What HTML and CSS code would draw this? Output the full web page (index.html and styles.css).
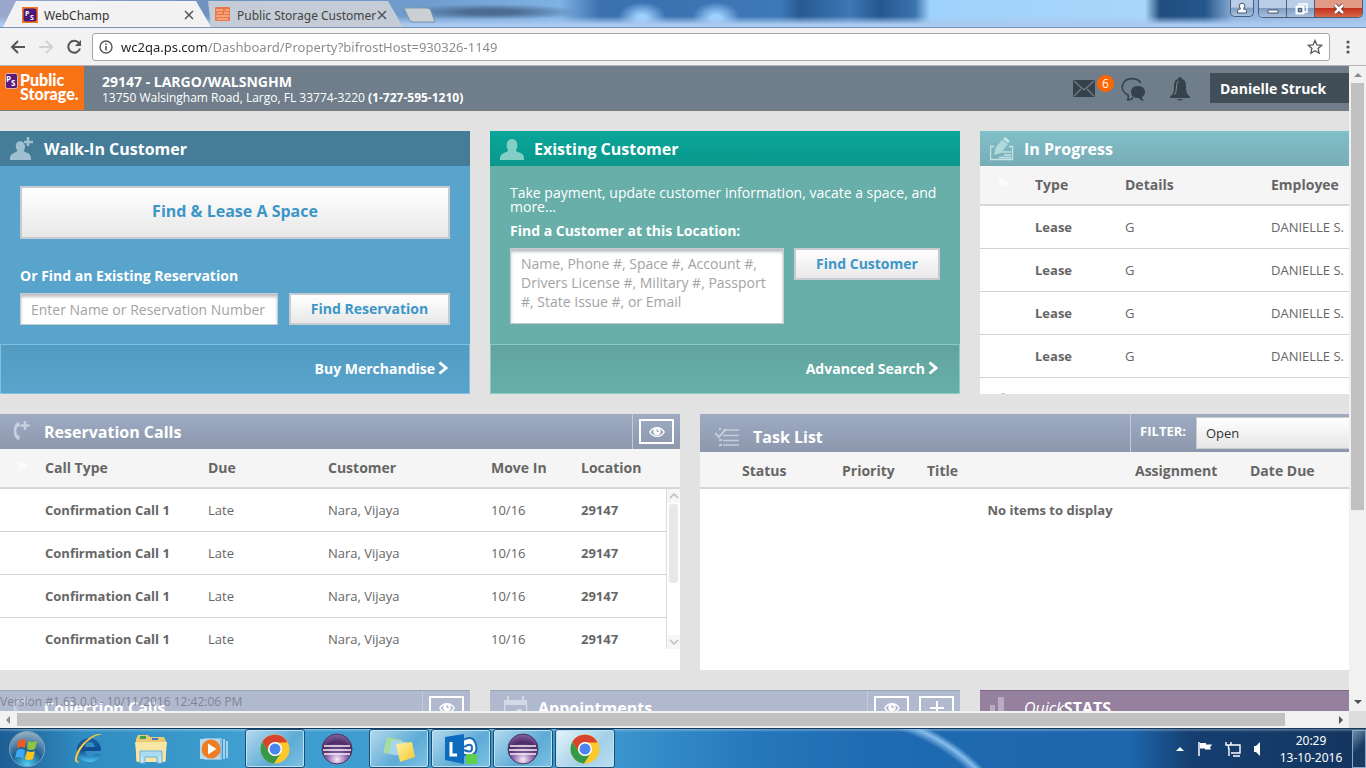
FILE: index.html
```html
<!DOCTYPE html>
<html lang="en">
<head>
<meta charset="utf-8">
<title>WebChamp</title>
<link rel="stylesheet" href="styles.css">
</head>
<body>
<svg class="defs" aria-hidden="true">
  <defs>
    <radialGradient id="orb" cx=".5" cy=".95" r=".9"><stop offset="0" stop-color="#4fd0f0"/><stop offset=".5" stop-color="#1c5f94"/><stop offset="1" stop-color="#8fa9bd"/></radialGradient>
    <radialGradient id="plum" cx=".5" cy=".85" r=".8"><stop offset="0" stop-color="#f4ecf8"/><stop offset=".35" stop-color="#a179b8"/><stop offset=".7" stop-color="#4a2a66"/><stop offset="1" stop-color="#7d5b96"/></radialGradient>
    <linearGradient id="ie" x1="0" y1="0" x2="0" y2="1"><stop offset="0" stop-color="#1a5fae"/><stop offset=".5" stop-color="#0f4a90"/><stop offset="1" stop-color="#4cc4f0"/></linearGradient>
    <linearGradient id="note" x1="0" y1="0" x2="1" y2="1"><stop offset="0" stop-color="#fff3a0"/><stop offset="1" stop-color="#f2c832"/></linearGradient>
  </defs>
  <symbol id="i-eye" viewBox="0 0 16 12"><path d="M.8 6C4 .2 12 .2 15.2 6 12 11.8 4 11.8.8 6z" fill="none" stroke="#fff" stroke-width="1.500"/><circle cx="8" cy="5.400" r="3.700" fill="#fff"/><path d="M8 3.300v2h1.800" stroke="#8d98b0" stroke-width="1" fill="none"/></symbol>
  <symbol id="i-phone" viewBox="0 0 20 22"><path d="M8 2C1 3 1 19 8 20l1-4-2.500-1C5 13 5 9 6.500 7L9 6z" fill="#c7cedd"/><path d="M14 1v9M9.500 5.500h9" stroke="#c7cedd" stroke-width="2.500"/></symbol>
  <symbol id="i-chrome" viewBox="0 0 30 30"><circle cx="15" cy="15" r="14.500" fill="#fbc92d"/><path d="M2.400 7.800A14.500 14.500 0 0 1 27.600 8.500H15A7 7 0 0 0 8.500 18z" fill="#d8432e"/><path d="M2.400 7.800A14.500 14.500 0 0 0 14 29.500L20.500 19.500A7 7 0 0 1 9 18.500z" fill="#36994a"/><circle cx="15" cy="15" r="7" fill="#fff"/><circle cx="15" cy="15" r="5.500" fill="#4a85f0"/></symbol>
  <symbol id="i-eclipse" viewBox="0 0 32 32"><circle cx="16" cy="16" r="15" fill="url(#plum)" stroke="#4b3660"/><path d="M3 13h26M2 17h28M3 21h26" stroke="#f3edf7" stroke-width="1.500"/><path d="M4 15h24M4 19h24" stroke="#4a2c62" stroke-width="1"/></symbol>
</svg>

<div class="titlebar">
  <div class="tabs">
    <div class="tab tab-on">
      <svg width="16" height="16" viewBox="0 0 16 16"><path fill="#f47920" d="M0 0h16v16H0z"/><rect x="1.500" y="1.500" width="13" height="13" rx="2" fill="#4b1878"/><text x="3" y="9" class="fav">P</text><text x="8" y="13" class="fav">S</text></svg>
      <span class="tab-name">WebChamp</span>
      <button class="tab-x" aria-label="Close tab"><svg width="10" height="10"><path d="M1 1l8 8M9 1L1 9" stroke="#555" stroke-width="1.500"/></svg></button>
    </div>
    <div class="tab tab-off">
      <svg width="16" height="16" viewBox="0 0 16 16"><rect width="15" height="14" rx="1" fill="#ee7746"/><path d="M1 3h7M10 3h4M2 6h5M9 6h5M1 9h13M2 12h11" stroke="#fbd0b8"/></svg>
      <span class="tab-name">Public Storage Customer</span>
      <button class="tab-x" aria-label="Close tab"><svg width="10" height="10"><path d="M1 1l8 8M9 1L1 9" stroke="#555" stroke-width="1.500"/></svg></button>
    </div>
    <button class="newtab" aria-label="New tab"><svg width="36" height="16"><path d="M2 1h23q3 0 4 3l4 11H11q-3 0-4-3z" fill="#cbd0d5" stroke="#7d93ab"/></svg></button>
  </div>
  <div class="winbtns">
    <button class="wb wb-user" aria-label="User"><svg width="12" height="12"><circle cx="6" cy="4" r="2.800" fill="#fff" stroke="#46596e"/><path d="M1.500 11V9q0-2 3-2h3q3 0 3 2v2z" fill="#fff" stroke="#46596e"/><path d="M4.800 5.500h2.400v2.500H4.800z" fill="#fff"/></svg></button>
    <div class="wb-group">
      <button class="wb" aria-label="Minimize"><svg width="14" height="12"><path d="M2 7h10v3H2z" fill="#fff" stroke="#46596e"/></svg></button>
      <button class="wb" aria-label="Restore"><svg width="14" height="12"><path d="M4 1h9v8h-3" fill="none" stroke="#fff" stroke-width="1.500"/><rect x="2.500" y="3.500" width="7" height="7" fill="none" stroke="#fff" stroke-width="2"/><path d="M4.500 5.500h3v3h-3z" fill="none" stroke="#46596e"/></svg></button>
      <button class="wb wb-close" aria-label="Close"><svg width="14" height="12"><path d="M3 2l8 8M11 2l-8 8" stroke="#5d2a2a" stroke-width="4"/><path d="M3 2l8 8M11 2l-8 8" stroke="#fff" stroke-width="2.500"/></svg></button>
    </div>
  </div>
</div>

<div class="toolbar">
  <button class="nav" aria-label="Back"><svg width="16" height="16"><path d="M15 8H2M8 2L2 8l6 6" fill="none" stroke="#555" stroke-width="2"/></svg></button>
  <button class="nav" aria-label="Forward"><svg width="16" height="16"><path d="M1 8h13M8 2l6 6-6 6" fill="none" stroke="#d2d2d2" stroke-width="2"/></svg></button>
  <button class="nav" aria-label="Reload"><svg width="16" height="16"><path d="M13 4A6 6 0 1 0 14 9.500" fill="none" stroke="#555" stroke-width="2"/><path d="M15 1v6H9z" fill="#555"/></svg></button>
  <div class="omnibox">
    <svg width="14" height="14"><circle cx="7" cy="7" r="6" fill="none" stroke="#555" stroke-width="1.400"/><path d="M7 6v4.500M7 3.500V5" stroke="#555" stroke-width="1.600"/></svg>
    <input class="url" aria-label="Address" value="wc2qa.ps.com/Dashboard/Property?bifrostHost=930326-1149">
    <button class="nav" aria-label="Bookmark"><svg width="16" height="16"><path d="M8 1.500l1.900 4.400 4.800.4-3.600 3.200 1 4.700L8 11.700l-4.100 2.500 1-4.700L1.300 6.300l4.800-.4z" fill="none" stroke="#555" stroke-width="1.300"/></svg></button>
  </div>
  <button class="nav" aria-label="Menu"><svg width="4" height="16"><g fill="#555"><circle cx="2" cy="3" r="1.600"/><circle cx="2" cy="8" r="1.600"/><circle cx="2" cy="13" r="1.600"/></g></svg></button>
</div>

<div class="viewport">
  <div class="page">
    <div class="doc">
      <header class="site">
        <a class="brand" href="#">
          <svg width="13" height="16" viewBox="0 0 13 16"><rect x=".5" y=".5" width="12" height="15" rx="2" fill="#5c1a7c" stroke="#fff" stroke-width=".6"/><text x="1" y="9" class="fav fav-b">P</text><text x="6" y="13" class="fav fav-b">S</text></svg>
          <span class="brand-name">Public<br>Storage.</span>
        </a>
        <div class="store">
          <div class="store-name">29147 - LARGO/WALSNGHM</div>
          <div class="store-addr">13750 Walsingham Road, Largo, FL 33774-3220 <b>(1-727-595-1210)</b></div>
        </div>
        <div class="alerts">
          <button class="alert" aria-label="Mail"><svg width="22" height="18"><rect width="22" height="17" rx="1" fill="#35424c"/><path d="M1 1l10 9L21 1M1 16l7-7M21 16l-7-7" fill="none" stroke="#6f7e8a" stroke-width="1.300"/></svg><span class="badge">6</span></button>
          <button class="alert" aria-label="Messages"><svg width="25" height="25" viewBox="0 0 25 25"><path d="M20 6C16 0 5 0 2 7c-2 5 1 9 5 11q1 4-1 5 5 0 6-3" fill="none" stroke="#35424c" stroke-width="1.600"/><path d="M17 9c4 0 7 2 7 6 0 3-2 4-3 5q0 3 3 4-5 0-6-3c-5 0-8-2-8-6s3-6 7-6z" fill="#35424c"/></svg></button>
          <button class="alert" aria-label="Notifications"><svg width="20" height="24" viewBox="0 0 20 24"><path d="M10 0q2 0 2 2c4 1 4 5 4 9q0 6 4 9v1H0v-1q4-3 4-9c0-4 0-8 4-9q0-2 2-2zM7 22h6q-3 3-6 0z" fill="#35424c"/><path d="M8.500 4q-2 1-2 6t-2 8" fill="none" stroke="#7c8993"/></svg></button>
        </div>
        <button class="user">Danielle Struck</button>
      </header>

      <main class="board">
        <div class="row row-top">
          <section class="card walkin">
            <h2 class="head"><svg class="ic" width="24" height="24"><path d="M0 23v-2q0-4 6-6c2-1 1-2 0-4-2-9 10-9 9 0-1 2-2 3 0 4 6 2 6 4 6 8z" fill="#9fc0d1"/><path d="M18 0v9M14 5h9" stroke="#9fc0d1" stroke-width="2.500"/></svg>Walk-In Customer</h2>
            <form class="body">
              <button type="button" class="btn btn-big">Find &amp; Lease A Space</button>
              <label class="lbl" for="resv">Or Find an Existing Reservation</label>
              <div class="fields"><input class="box" id="resv" placeholder="Enter Name or Reservation Number"><button type="button" class="btn btn-resv">Find Reservation</button></div>
            </form>
            <div class="foot"><a href="#">Buy Merchandise<svg width="10" height="14"><path d="M1.500 1.500L8 7l-6.500 5.500" fill="none" stroke="#fff" stroke-width="2.800"/></svg></a></div>
          </section>
          <section class="card existing">
            <h2 class="head"><svg class="ic" width="24" height="24"><path d="M0 23v-2q0-4 6-6c3-1 2-2 1-4-3-12 13-12 10 0-1 2-2 3 1 4 6 2 6 4 6 8z" fill="#84cfc5"/></svg>Existing Customer</h2>
            <form class="body">
              <p class="hint">Take payment, update customer information, vacate a space, and more...</p>
              <label class="lbl" for="cust">Find a Customer at this Location:</label>
              <div class="fields"><textarea class="box area" id="cust" placeholder="Name, Phone #, Space #, Account #, Drivers License #, Military #, Passport #, State Issue #, or Email"></textarea><button type="button" class="btn btn-cust">Find Customer</button></div>
            </form>
            <div class="foot"><a href="#">Advanced Search<svg width="10" height="14"><path d="M1.500 1.500L8 7l-6.500 5.500" fill="none" stroke="#fff" stroke-width="2.800"/></svg></a></div>
          </section>
          <section class="card progress">
            <h2 class="head"><svg class="ic" width="24" height="24"><path d="M4 9.500H.5v13h22v-13H19M12 15h9M14 18h7M9 20.500h12" fill="none" stroke="#c2e2e6" stroke-width="1.400"/><path d="M4 18l2-8 6-7 6 4-7 9z" fill="#b2d9de"/><path d="M13 2l2-2 5 4-2 2z" fill="#c9e5e8"/></svg>In Progress</h2>
            <table class="grid">
              <colgroup><col class="w55"><col class="w90"><col class="w146"><col></colgroup>
              <thead><tr><th><svg class="flag" width="11" height="13"><path d="M1 1h5l1 2h3v5H2z" fill="#fbfbfb"/></svg></th><th>Type</th><th>Details</th><th>Employee</th></tr></thead>
              <tbody>
                <tr><td></td><td><b>Lease</b></td><td>G</td><td>DANIELLE S.</td></tr>
                <tr><td></td><td><b>Lease</b></td><td>G</td><td>DANIELLE S.</td></tr>
                <tr><td></td><td><b>Lease</b></td><td>G</td><td>DANIELLE S.</td></tr>
                <tr><td></td><td><b>Lease</b></td><td>G</td><td>DANIELLE S.</td></tr>
                <tr><td><svg class="flag" width="12" height="13"><circle cx="6" cy="6" r="5.500" fill="#666"/></svg></td><td></td><td></td><td></td></tr>
              </tbody>
            </table>
          </section>
        </div>

        <div class="row row-mid">
          <section class="card calls">
            <h2 class="head slate"><svg class="ic" width="24" height="24"><use href="#i-phone" x="1" y="0" width="20" height="22"/></svg>Reservation Calls<span class="tools"><button class="sq" aria-label="View"><svg width="16" height="12"><use href="#i-eye"/></svg></button></span></h2>
            <div class="pane">
              <table class="grid">
                <colgroup><col class="w45"><col class="w163"><col class="w120"><col class="w163"><col class="w90"><col></colgroup>
                <thead><tr><th><svg class="flag" width="11" height="13"><path d="M1 1h5l1 2h3v5H2z" fill="#fbfbfb"/></svg></th><th>Call Type</th><th>Due</th><th>Customer</th><th>Move In</th><th>Location</th></tr></thead>
                <tbody>
                  <tr><td></td><td><b>Confirmation Call 1</b></td><td>Late</td><td>Nara, Vijaya</td><td>10/16</td><td><b>29147</b></td></tr>
                  <tr><td></td><td><b>Confirmation Call 1</b></td><td>Late</td><td>Nara, Vijaya</td><td>10/16</td><td><b>29147</b></td></tr>
                  <tr><td></td><td><b>Confirmation Call 1</b></td><td>Late</td><td>Nara, Vijaya</td><td>10/16</td><td><b>29147</b></td></tr>
                  <tr><td></td><td><b>Confirmation Call 1</b></td><td>Late</td><td>Nara, Vijaya</td><td>10/16</td><td><b>29147</b></td></tr>
                </tbody>
              </table>
              <div class="thin"><svg width="13" height="14"><path d="M3 9l4-4 4 4" fill="none" stroke="#bbb" stroke-width="1.500"/></svg><i class="thin-thumb"></i><svg width="13" height="14"><path d="M3 5l4 4 4-4" fill="none" stroke="#bbb" stroke-width="1.500"/></svg></div>
            </div>
          </section>
          <section class="card tasks">
            <div class="head slate tall"><h2 class="task-title"><svg width="24" height="20"><path d="M8 3h16M8 8.500h16M8 13.500h16M8 18h16" stroke="#c5ccdb" stroke-width="1.600"/><path d="M0 6l4 4 7-8" fill="none" stroke="#c5ccdb" stroke-width="2"/><path d="M4 1h2v2H4zM4 17h3v2H4zM4 12h3v2H4z" fill="#c5ccdb"/></svg>Task List</h2>
              <div class="filter"><label for="flt">FILTER:</label><select id="flt"><option>Open</option></select></div></div>
            <table class="grid task-grid">
              <colgroup><col class="w42"><col class="w100"><col class="w85"><col class="w208"><col class="w115"><col></colgroup>
              <thead><tr><th></th><th>Status</th><th>Priority</th><th>Title</th><th>Assignment</th><th>Date Due</th></tr></thead>
              <tbody><tr><td colspan="6" class="none"><b>No items to display</b></td></tr></tbody>
            </table>
          </section>
        </div>

        <div class="row row-low">
          <section class="card"><h2 class="head pale"><svg class="ic" width="24" height="24"><use href="#i-phone" x="1" y="0" width="20" height="22"/></svg>Collection Calls<span class="tools"><button class="sq" aria-label="View"><svg width="16" height="12"><use href="#i-eye"/></svg></button></span></h2></section>
          <section class="card"><h2 class="head pale appt"><svg class="ic" width="24" height="24"><path d="M0 4h3V0h2v4h13V0h2v4h3v5H0z" fill="#d3d9e6"/><path d="M.7 9v14h22V9" fill="none" stroke="#d3d9e6" stroke-width="1.400"/><path d="M13 13h5v5h-5z" fill="#d3d9e6"/></svg>Appointments<span class="tools"><button class="sq" aria-label="View"><svg width="16" height="12"><use href="#i-eye"/></svg></button><button class="sq" aria-label="Add"><svg width="16" height="14"><path d="M8 0v14M1 7h14" stroke="#fff" stroke-width="2"/></svg></button></span></h2></section>
          <section class="card"><h2 class="head stats"><svg class="ic" width="24" height="24"><path d="M0 9h5v15H0zM8 1h6v23H8zM17 17h5v7h-5z" fill="#baabc0"/></svg><span><em>Quick</em>STATS</span></h2></section>
        </div>
      </main>
    </div>
    <div class="version">Version #1.63.0.0 - 10/11/2016 12:42:06 PM</div>
  </div>
  <div class="vbar"><svg width="17" height="17"><path d="M5 11l4-4 4 4z" fill="#8a8a8a"/></svg><i class="vthumb"></i><svg class="end" width="17" height="17"><path d="M5 6l4 4 4-4z" fill="#505050"/></svg></div>
</div>
<div class="hbar"><svg width="17" height="17"><path d="M10 5L6 9l4 4z" fill="#8a8a8a"/></svg><div class="htrack"><i class="hthumb"></i></div><svg width="17" height="17"><path d="M7 5l4 4-4 4z" fill="#505050"/></svg><i class="corner"></i></div>

<div class="taskbar">
  <button class="start" aria-label="Start"><svg width="38" height="38" viewBox="0 0 38 38"><circle cx="19" cy="19" r="17.500" fill="url(#orb)" stroke="#7fa5bf"/><path d="M10 11q4-3 8-1l-1 8q-4-2-8 0z" fill="#ee5a24"/><path d="M20 11q4 2 9 0l-2 8q-4 2-8 0z" fill="#8cc63f"/><path d="M9 20q4-2 8 0l-2 8q-4-2-8 0z" fill="#3fa9f5"/><path d="M19 21q4 2 8 0l-2 8q-4 2-8 0z" fill="#fcc419"/></svg></button>
  <button class="app" aria-label="Internet Explorer"><svg width="32" height="32" viewBox="0 0 32 32"><path d="M28 18H12q1 6 6 5 3 0 4-2h6q-3 8-11 8A12 12 0 1 1 28 18zM12 14h10q-1-5-5-5t-5 5z" fill="url(#ie)" fill-rule="evenodd"/><path d="M29 2Q25-1 16 5 4 14 2 25q-1 6 5 4-5 0-2-7Q9 12 19 5q7-4 10-3z" fill="#f7c83c"/></svg></button>
  <button class="app" aria-label="Explorer"><svg width="34" height="32" viewBox="0 0 34 32"><path d="M2 6l2-4h10l2 2h14l2 4v20H2z" fill="#ecc872"/><path d="M6 3h6v3H6z" fill="#3aa24c"/><path d="M18 5h6v2h-6z" fill="#4477cc"/><path d="M1 9h32l-2 20H3z" fill="#f9e6a4"/><path d="M6 18h22v12h-5v-6H11v6H6z" fill="#a9dcf2" stroke="#6fb3d8"/><path d="M8 24v6M26 24v6" stroke="#e9f7fd"/></svg></button>
  <button class="app" aria-label="Media Player"><svg width="30" height="28" viewBox="0 0 30 28"><path d="M6 3h18v22H6z" fill="#8bbfe0"/><path d="M26 4v20M29 6v17" stroke="#c5e2f3" stroke-width="1.500"/><path d="M2 4h20v20H2z" fill="#b8d8ec"/><circle cx="13" cy="14" r="9.500" fill="#ef7d22"/><path d="M10 8.500l8.500 5.500-8.500 5.500z" fill="#fff"/></svg></button>
  <button class="app open" aria-label="Chrome"><svg width="30" height="30"><use href="#i-chrome"/></svg></button>
  <button class="app" aria-label="Eclipse"><svg width="32" height="32"><use href="#i-eclipse"/></svg></button>
  <button class="app open" aria-label="Sticky Notes"><svg width="32" height="28" viewBox="0 0 32 28"><path d="M4 2l15 3-4 15L0 18z" fill="#a9dc9c"/><path d="M9 5l14 2-3 14L6 19z" fill="#a5d6ee"/><path d="M13 9l16-2 3 15-15 5z" fill="url(#note)"/></svg></button>
  <button class="app open" aria-label="Lync"><svg width="34" height="32" viewBox="0 0 34 32"><path d="M19 7q9-5 12 2 4 10-3 13-6 2-10-2" fill="#fff" stroke="#1c6cb8" stroke-width="2"/><path d="M20 14q8-5 8 1t-8 2" fill="none" stroke="#1c6cb8" stroke-width="2"/><path d="M1 4l19-3v30L1 27z" fill="#0d6cbd"/><path d="M7 9v13h6" fill="none" stroke="#fff" stroke-width="3"/><path d="M22 21h11v10H22z" fill="#5fd04a"/></svg></button>
  <button class="app open" aria-label="Eclipse"><svg width="32" height="32"><use href="#i-eclipse"/></svg></button>
  <button class="app open active" aria-label="Chrome"><svg width="30" height="30"><use href="#i-chrome"/></svg></button>
  <div class="tray">
    <svg width="10" height="8"><path d="M1 6l4-4 4 4z" fill="#fff"/></svg>
    <svg width="16" height="16"><path d="M2 1v14" stroke="#fff" stroke-width="1.500"/><path d="M3 2h6v1.500h6l-2 3 1 2H8V7.500H3z" fill="#fff"/></svg>
    <svg width="16" height="16"><path d="M5 4h10v8H6M8 15h7M4 7v8M1 1v3h5V1M3.500 4v4" fill="none" stroke="#fff" stroke-width="1.400"/></svg>
    <svg width="10" height="16"><path d="M1 5h2l4-4v14l-4-4H1z" fill="#fff"/></svg>
    <div class="clock">20:29<br>13-10-2016</div>
    <button class="desk" aria-label="Show desktop"></button>
  </div>
</div>
</body>
</html>
```

FILE: styles.css
```css
* { box-sizing: border-box; }
html, body { height: 100%; }
body { margin: 0; display: flex; flex-direction: column; overflow: hidden; font-family: "Open Sans", "Noto Sans", sans-serif; font-size: 14px; color: #666; background: #e2e2e2; }
button, input, select, textarea { font: inherit; }
button { border: 0; padding: 0; background: none; color: inherit; display: flex; align-items: center; justify-content: center; }
h2, p { margin: 0; }
svg { display: block; flex: none; }
a { color: inherit; text-decoration: none; }
i { display: block; }
.defs { position: absolute; width: 0; height: 0; }
.fav { font: 700 7px "Open Sans", sans-serif; fill: #fff; }
.fav-b { font-size: 8px; }

/* Window frame */
.titlebar { flex: none; height: 28px; display: flex; justify-content: space-between; align-items: flex-start; border-bottom: 1px solid #7893b5;
  background:
    linear-gradient(180deg, transparent 60%, #a9c9f0 90%),
    radial-gradient(ellipse 90px 8px at 490px 12px, #4d6c92 30%, transparent 100%),
    radial-gradient(ellipse 24px 16px at 642px 18px, #9dd0ff 20%, transparent 100%),
    radial-gradient(ellipse 24px 16px at 716px 18px, #9dd0ff 20%, transparent 100%),
    linear-gradient(90deg, #9aa8cc 0, #6f92bf 210px, #6f9ccd 420px, #7fb2e4 560px, #3a70ae 600px, #3d78b8 780px, #275a8f 800px, #3c78b6 850px, #24578c 880px, #3b73ae 915px, #9fd2fb 930px, #a8d6fb 1145px, #204d7f 1160px, #25568b 1205px, #92b4dc 1235px, #9dbde2 100%); }
.tabs { display: flex; height: 27px; }
.tab { display: flex; align-items: center; height: 27px; width: 211px; padding: 3px 17px 0 22px; gap: 6px; font-family: "Noto Sans", sans-serif; font-size: 12px; color: #333; clip-path: polygon(16px 1px, 196px 1px, 100% 100%, 3px 100%); }
.tab-on { background: #f2f2f2; }
.tab-off { background: #c3ccd7; width: 203px; margin-left: -11px; padding: 3px 16px 0 15px; color: #444; clip-path: polygon(8px 1px, 188px 1px, 100% 100%, 11px 100%); }
.tab-name { flex: 1; min-width: 0; white-space: nowrap; }
.tab-x { width: 10px; height: 10px; }
.newtab { margin: 7px 0 0 -1px; height: 16px; }
.winbtns { display: flex; gap: 4px; padding-right: 3px; }
.wb { width: 28px; height: 17px; background: linear-gradient(#b9cde6 45%, #7f9cc0 50%, #a7c0de); border-right: 1px solid #4a5f7c; }
.wb-user { width: 24px; border: 1px solid #4a5f7c; border-top: 0; border-radius: 0 0 5px 5px; }
.wb-group { display: flex; border: 1px solid #4a5f7c; border-top: 0; border-radius: 0 0 5px 5px; overflow: hidden; }
.wb-close { width: 47px; border: 0; background: linear-gradient(#e09a86 45%, #c4321c 50%, #d9694a); }

.toolbar { flex: none; height: 38px; display: flex; align-items: center; gap: 12px; padding: 0 16px 0 10px; background: #f2f2f2; border-bottom: 1px solid #b6b4b6; }
.omnibox { flex: 1; display: flex; align-items: center; height: 28px; gap: 8px; padding: 0 6px; border: 1px solid #a6a6a6; border-radius: 3px; background: #fff; margin: 0 4px 0 -2px; }
.url { flex: 1; border: 0; padding: 0; outline: 0; font-family: "Noto Sans", sans-serif; font-size: 13px; color: transparent; background: linear-gradient(90deg, #222 86px, #888 86px); -webkit-background-clip: text; background-clip: text; }

/* Scrolling page */
.viewport { flex: 1; min-height: 0; display: flex; }
.page { flex: 1; min-width: 0; position: relative; overflow: hidden; background: #e2e2e2; }
.doc { min-width: 1400px; }
.version { position: absolute; left: 0; bottom: 0; font-size: 12px; line-height: 18px; color: #7f8596; }
.vbar { flex: none; width: 17px; display: flex; flex-direction: column; background: #f1f1f1; }
.vthumb { width: 13px; height: 427px; margin-left: 2px; background: #c1c1c1; }
.end { margin-top: auto; }
.hbar { flex: none; height: 17px; display: flex; background: #f1f1f1; }
.htrack { flex: 1; padding: 2px 0; }
.hthumb { width: 96.400%; height: 13px; background: #c1c1c1; }
.corner { width: 17px; background: #dcdcdc; }

/* Site header */
.site { display: flex; align-items: center; height: 45px; background: #6f7e8a; color: #fff; border-bottom: 1px solid #7b7b7b; }
.brand { display: flex; align-items: flex-start; align-self: stretch; width: 84px; padding: 7px 0 0 5px; gap: 2px; background: #f97316; }
.brand-name { font: 900 16px/14px Lato, sans-serif; }
.store { flex: 1; padding: 4px 0 0 18px; line-height: 16px; }
.store-name { font-weight: 700; }
.store-addr { font-size: 12px; }
.alerts { display: flex; align-items: center; gap: 24px; padding: 2px 20px 0 0; }
.alert { position: relative; }
.alert:first-child { margin-right: 2px; }
.badge { position: absolute; left: 24px; top: -5px; width: 17px; height: 17px; border-radius: 50%; background: #f60; font-size: 12px; line-height: 17px; text-align: center; color: #fff; }
.user { width: 190px; height: 30px; padding-left: 10px; justify-content: flex-start; background: #424e57; font-weight: 700; }

/* Cards */
.board { display: flex; flex-direction: column; gap: 20px; padding-top: 20px; }
.row { display: grid; gap: 20px; }
.row-top, .row-low { grid-template-columns: 470px 470px 1fr; }
.row-top { height: 263px; }
.row-mid { grid-template-columns: 680px 1fr; height: 256px; }
.card { display: flex; flex-direction: column; background: #fff; overflow: hidden; min-width: 0; min-height: 0; }
.head { flex: none; display: flex; align-items: center; height: 35px; padding-left: 10px; gap: 10px; font-size: 16px; font-weight: 700; color: #fff; }
.walkin { background: #59a4cc; }
.walkin .head { background: #457c98; }
.existing { background: #68afa9; }
.existing .head { background: linear-gradient(#0ba69a, #0a978b); }
.progress .head { background: linear-gradient(#80c0c9, #78acb6); }
.slate { background: linear-gradient(#9eabc3, #8d98ad); }
.pale { background: #b1b9cf; border-top: 1px solid #9aa3ba; }
.appt { padding-left: 14px; }
.stats { background: #95809e; border-top: 1px solid #7d6886; }
.stats em { font-weight: 400; }
.body { flex: 1; min-height: 0; padding: 20px 20px 0; display: flex; flex-direction: column; }
.btn { height: 32px; padding-bottom: 2px; border: 2px solid #c5cbd1; background: linear-gradient(#fff, #e8e8e8); color: #3d96c8; font-weight: 700; }
.btn-big { flex: none; height: 53px; font-size: 16px; margin-bottom: 27px; padding-bottom: 4px; }
.btn-resv { width: 161px; }
.btn-cust { width: 146px; }
.lbl { line-height: 20px; margin-bottom: 7px; color: #fff; font-weight: 700; }
.fields { display: flex; align-items: flex-start; gap: 11px; }
.existing .fields { gap: 10px; }
.box { flex: 1; min-width: 0; height: 32px; border: 1px solid #c5cbd1; padding: 0 10px; background: #fff; box-shadow: inset 0 3px 3px #bfc0c6; outline: 0; }
.box::placeholder { color: #a3a3a3; opacity: 1; }
.area { height: 76px; padding: 5px 10px; line-height: 19px; resize: none; overflow: hidden; display: block; }
.hint { color: #fff; line-height: 14px; margin-bottom: 7px; }
.foot { flex: none; height: 50px; display: flex; align-items: center; justify-content: flex-end; padding: 0 21px 2px 0; color: #fff; font-weight: 700; border: 1px solid #7fc0e0; background: linear-gradient(#529bc1, #59a4cc); }
.existing .foot { border-color: #8ccbc5; background: linear-gradient(#60a49e, #68afa9); }
.foot a { display: flex; align-items: center; gap: 3px; }

.grid { width: 100%; border-collapse: separate; border-spacing: 0; table-layout: fixed; }
.grid th { height: 40px; padding: 0 0 2px; text-align: left; font-weight: 700; background: #f5f5f5; border-bottom: 2px solid #d6d6d6; }
.grid td { height: 43px; padding: 0; font-size: 13px; border-bottom: 1px solid #d2d2d2; background: #fff; white-space: nowrap; }
.grid b { font-weight: 700; }
.grid.task-grid th { height: 37px; padding: 2px 0 0; }
.grid .none { padding-bottom: 2px; text-align: center; border: 0; }
.flag { margin-left: 17px; }
.w42 { width: 42px; } .w45 { width: 45px; } .w55 { width: 55px; } .w85 { width: 85px; } .w90 { width: 90px; }
.w100 { width: 100px; } .w115 { width: 115px; } .w120 { width: 120px; } .w146 { width: 146px; } .w163 { width: 163px; } .w208 { width: 208px; }
.pane { position: relative; height: 200px; overflow: hidden; }
.thin { position: absolute; right: 0; top: 40px; bottom: 0; width: 14px; display: flex; flex-direction: column; background: #fff; border-left: 1px solid #ddd; }
.thin svg { background: #f6f6f6; }
.thin svg:last-child { margin-top: auto; }
.thin-thumb { width: 9px; height: 79px; margin: 1px 2px; border-radius: 3px; background: #e8e8e8; }
.tools { display: flex; align-items: center; gap: 10px; margin-left: auto; align-self: stretch; padding: 0 6px; border-left: 1px solid #c3cad9; }
.sq { width: 35px; height: 25px; border: 2px solid #fff; }
.tall { height: 38px; padding-left: 15px; justify-content: space-between; }
.task-title { display: flex; align-items: center; gap: 14px; padding-top: 7px; font-size: 16px; }
.filter { display: flex; align-self: stretch; align-items: center; gap: 10px; padding-left: 9px; border-left: 1px solid #c3cad9; font-size: 13px; }
.filter label { padding-bottom: 4px; }
.filter select { width: 204px; height: 32px; padding: 0 9px; border: 1px solid #ccc; border-radius: 0; appearance: none; background: linear-gradient(#fff, #e6e6e6); color: #333; font-weight: 400; }

/* Desktop taskbar */
.taskbar { flex: none; height: 40px; display: flex; gap: 2px; border-top: 1px solid #12395c;
  background:
    radial-gradient(circle 192px at 0 172px, transparent 93%, #86bdeb 97%, transparent 100%) 845px 0 / 200px 100% no-repeat,
    linear-gradient(#ffffff55, transparent 3px),
    linear-gradient(90deg, #1d5d94 0, #2f8bc0 80px, #3f9fd0 240px, #3d98cf 600px, #2577bb 760px, #1f6ab2 880px, #1e66ae 1130px, #153f70 1190px, #14355f 100%); }
.start { width: 57px; padding-right: 3px; }
.app { width: 60px; height: 39px; }
.open { border: 1px solid #1c4e73; border-radius: 3px; box-shadow: inset 0 0 0 1px #bfe2f4; background: linear-gradient(135deg, #b5daee, #5dabd6 60%, #7ec3e4); }
.active { background: linear-gradient(135deg, #e6f4fb, #a3d0e8 60%, #b9def0); }
.tray { margin-left: auto; display: flex; align-items: center; gap: 12px; color: #fff; }
.clock { width: 72px; margin-right: -7px; font: 12px/17px "Noto Sans", sans-serif; text-align: center; white-space: nowrap; }
.desk { width: 14px; height: 38px; border: 1px solid #8aa6c0; background: linear-gradient(135deg, #6c8fb0, #173b63 50%); }
```
